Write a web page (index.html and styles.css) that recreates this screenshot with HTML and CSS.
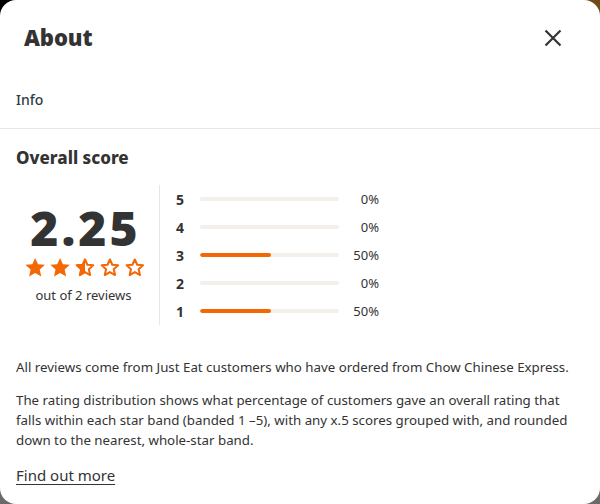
FILE: index.html
```html
<!DOCTYPE html>
<html>
<head>
<meta charset="utf-8">
<link rel="stylesheet" href="styles.css">
</head>
<body>
<div class="modal">
  <header class="modal-head">
    <h1 class="title">About</h1>
    <button class="close" aria-label="Close">
      <svg width="18" height="18" viewBox="0 0 18 18"><path d="M1.5 1.5 L16.5 16.5 M16.5 1.5 L1.5 16.5" stroke="#333" stroke-width="2.2" fill="none"/></svg>
    </button>
  </header>
  <div class="tab">Info</div>
  <section class="content">
    <h2 class="section-title">Overall score</h2>
    <div class="score">
      <div class="summary">
        <div class="big">2.25</div>
        <div class="stars">
          <svg width="120" height="21" viewBox="0 0 118 20">
            <defs>
              <path id="st" d="M10 0.6 L12.8 6.8 L19.6 7.4 L14.5 12 L16 18.8 L10 15.3 L4 18.8 L5.5 12 L0.4 7.4 L7.2 6.8 Z"/>
              <clipPath id="half"><rect x="0" y="0" width="10" height="20"/></clipPath>
            </defs>
            <use href="#st" x="0" fill="#f36805"/>
            <use href="#st" x="24.5" fill="#f36805"/>
            <g transform="translate(49 0)">
              <use href="#st" fill="none" stroke="#f36805" stroke-width="2.4" stroke-linejoin="round" transform="translate(10 10) scale(0.84) translate(-10 -10)"/>
              <use href="#st" fill="#f36805" clip-path="url(#half)"/>
            </g>
            <use href="#st" x="73.5" fill="none" stroke="#f36805" stroke-width="2.4" stroke-linejoin="round" transform="translate(83.5 10) scale(0.84) translate(-83.5 -10)"/>
            <use href="#st" x="98" fill="none" stroke="#f36805" stroke-width="2.4" stroke-linejoin="round" transform="translate(108 10) scale(0.84) translate(-108 -10)"/>
          </svg>
        </div>
        <div class="count">out of 2 reviews</div>
      </div>
      <div class="dist">
        <div class="row"><span class="num">5</span><span class="track"><span class="fill" style="width:0%"></span></span><span class="pct">0%</span></div>
        <div class="row"><span class="num">4</span><span class="track"><span class="fill" style="width:0%"></span></span><span class="pct">0%</span></div>
        <div class="row"><span class="num">3</span><span class="track"><span class="fill" style="width:51%"></span></span><span class="pct">50%</span></div>
        <div class="row"><span class="num">2</span><span class="track"><span class="fill" style="width:0%"></span></span><span class="pct">0%</span></div>
        <div class="row"><span class="num">1</span><span class="track"><span class="fill" style="width:51%"></span></span><span class="pct">50%</span></div>
      </div>
    </div>
    <p class="para first">All reviews come from Just Eat customers who have ordered from Chow Chinese Express.</p>
    <p class="para">The rating distribution shows what percentage of customers gave an overall rating that falls within each star band (banded 1 –5), with any x.5 scores grouped with, and rounded down to the nearest, whole-star band.</p>
    <a class="more" href="#">Find out more</a>
  </section>
</div>
</body>
</html>
```

FILE: styles.css
```css
html, body {
  margin: 0;
  padding: 0;
  width: 600px;
  height: 504px;
  overflow: hidden;
}
body {
  background: linear-gradient(to right, #000 0%, #3a2a10 60%, #6e4a18 100%) top / 100% 30px no-repeat, #6a6a6a;
  font-family: "Noto Sans", "Open Sans", sans-serif;
  color: #333;
}
.modal {
  background: #fff;
  width: 600px;
  height: 504px;
  border-radius: 16px;
  box-sizing: border-box;
}
.modal-head {
  display: flex;
  align-items: center;
  justify-content: space-between;
  padding: 17px 38px 0 24px;
  height: 56px;
  box-sizing: border-box;
}
.title {
  margin: 0;
  font-family: "Noto Sans", sans-serif;
  font-weight: 900;
  font-size: 22px;
  letter-spacing: -0.1px;
  color: #333;
  line-height: 30px;
}
.close {
  border: 0;
  background: none;
  padding: 0;
  width: 18px;
  height: 18px;
  display: flex;
  margin-top: 2px;
}
.tab {
  margin-top: 30px;
  padding: 0 16px;
  font-size: 14px;
  font-weight: 500;
  color: #2e3c44;
  line-height: 28px;
  border-bottom: 1px solid #e6e6e6;
  box-sizing: border-box;
  height: 43px;
}
.content {
  padding: 0 16px;
}
.section-title {
  margin: 18px 0 0;
  font-size: 17px;
  font-weight: 800;
  line-height: 22px;
  color: #333;
}
.score {
  display: flex;
  margin-top: 16px;
  height: 140px;
}
.summary {
  width: 144px;
  border-right: 1px solid #e6e6e6;
  display: flex;
  flex-direction: column;
  align-items: center;
  padding-top: 17px;
  box-sizing: border-box;
}
.big {
  font-family: "Noto Sans", sans-serif;
  font-weight: 900;
  font-size: 48px;
  line-height: 52px;
  color: #333;
  letter-spacing: 3px;
  margin-left: -4px;
}
.stars {
  margin-top: 3px;
  height: 21px;
  margin-left: -5px;
}
.stars svg { display: block; }
.count {
  margin-top: 8px;
  font-size: 13px;
  color: #333;
  margin-left: -8px;
}
.dist {
  padding: 0 0 0 16px;
  display: flex;
  flex-direction: column;
}
.row {
  display: flex;
  align-items: center;
  height: 28px;
}
.num {
  width: 24px;
  font-size: 14px;
  font-weight: 700;
  color: #333;
}
.track {
  width: 139px;
  height: 4px;
  border-radius: 2px;
  background: #f3f0eb;
  display: block;
  overflow: hidden;
}
.fill {
  display: block;
  height: 100%;
  background: #f36805;
  border-radius: 2px;
}
.pct {
  width: 40px;
  text-align: right;
  font-size: 13px;
  color: #333;
}
.para {
  margin: 0;
  font-size: 13.3px;
  line-height: 20px;
  color: #333;
}
.para.first {
  margin-top: 32px;
  margin-bottom: 13px;
}
.more {
  display: inline-block;
  margin-top: 15px;
  font-size: 15px;
  color: #333;
  text-decoration: underline;
  text-underline-offset: 3px;
}
```
